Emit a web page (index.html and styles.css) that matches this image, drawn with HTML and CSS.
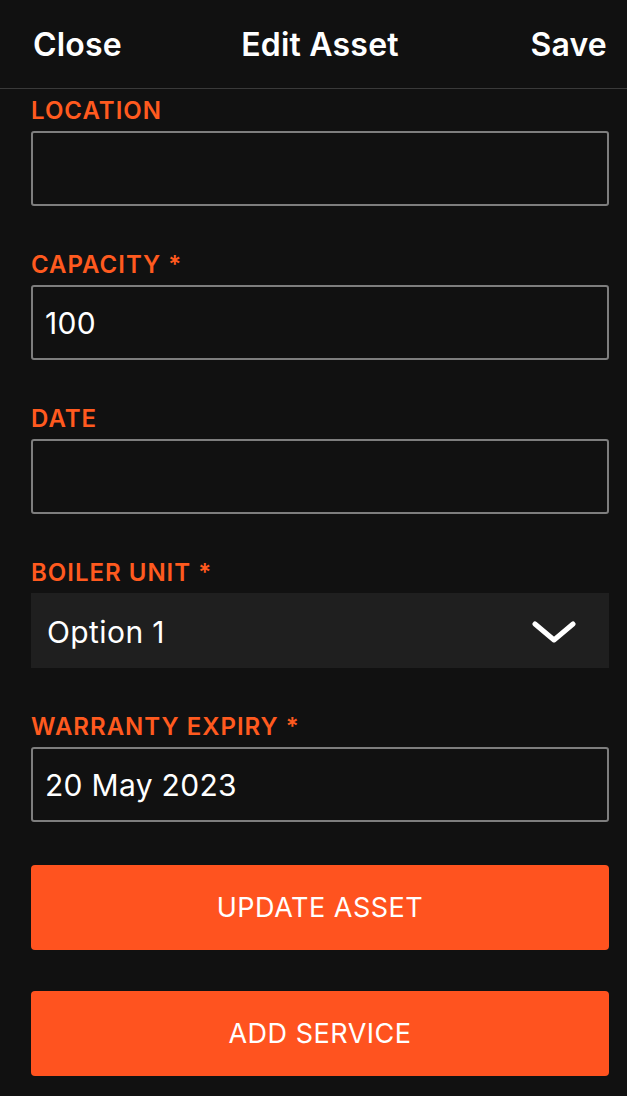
FILE: index.html
```html
<!DOCTYPE html>
<html lang="en">
<head>
<meta charset="utf-8">
<title>Edit Asset</title>
<link rel="stylesheet" href="styles.css">
</head>
<body>
<header class="topbar">
  <span class="nav-btn nav-left">Close</span>
  <span class="title">Edit Asset</span>
  <span class="nav-btn nav-right">Save</span>
</header>
<main class="form">
  <div class="field">
    <label class="label">LOCATION</label>
    <div class="input"></div>
  </div>
  <div class="field">
    <label class="label">CAPACITY *</label>
    <div class="input">100</div>
  </div>
  <div class="field">
    <label class="label">DATE</label>
    <div class="input"></div>
  </div>
  <div class="field">
    <label class="label">BOILER UNIT *</label>
    <div class="select">
      <span>Option 1</span>
      <svg class="chevron" width="44" height="26" viewBox="0 0 44 26"><polyline points="3,5 22,21 41,5" fill="none" stroke="#fff" stroke-width="5" stroke-linecap="round" stroke-linejoin="round"/></svg>
    </div>
  </div>
  <div class="field field-last">
    <label class="label">WARRANTY EXPIRY *</label>
    <div class="input">20 May 2023</div>
  </div>
  <button class="btn">UPDATE ASSET</button>
  <button class="btn">ADD SERVICE</button>
</main>
</body>
</html>
```
FILE: styles.css
```css
html, body {
  margin: 0;
  padding: 0;
  background: #111111;
  color: #ffffff;
  font-family: Inter, "Noto Sans", sans-serif;
}
.topbar {
  height: 89px;
  box-sizing: border-box;
  border-bottom: 1px solid #3a3a3a;
  display: grid;
  grid-template-columns: 1fr auto 1fr;
  align-items: center;
  padding: 0 20px 0 33px;
}
.nav-btn, .title {
  font-size: 32px;
  font-weight: 600;
  letter-spacing: 0.2px;
}
.nav-left { justify-self: start; }
.nav-right { justify-self: end; }
.form {
  padding: 7px 18px 0 31px;
  display: flex;
  flex-direction: column;
}
.field {
  display: flex;
  flex-direction: column;
  margin-bottom: 44px;
}
.field-last {
  margin-bottom: 43px;
}
.label {
  color: #ff5a1f;
  font-size: 24px;
  font-weight: 600;
  letter-spacing: 1px;
  height: 35px;
  line-height: 29px;
}
.input {
  height: 75px;
  box-sizing: border-box;
  border: 2px solid #7e7e7e;
  border-radius: 3px;
  display: flex;
  align-items: center;
  padding: 0 12px;
  font-size: 30px;
  letter-spacing: 0.3px;
}
.select {
  height: 75px;
  box-sizing: border-box;
  background: #1f1f1f;
  display: flex;
  align-items: center;
  justify-content: space-between;
  padding: 2px 33px 0 16px;
  font-size: 30px;
  letter-spacing: 0.4px;
}
.chevron {
  display: block;
}
.btn {
  height: 85px;
  border: none;
  border-radius: 4px;
  background: #ff531f;
  color: #ffffff;
  font-family: Inter, "Noto Sans", sans-serif;
  font-size: 27px;
  font-weight: 400;
  letter-spacing: 0.5px;
  margin-bottom: 41px;
}
```
